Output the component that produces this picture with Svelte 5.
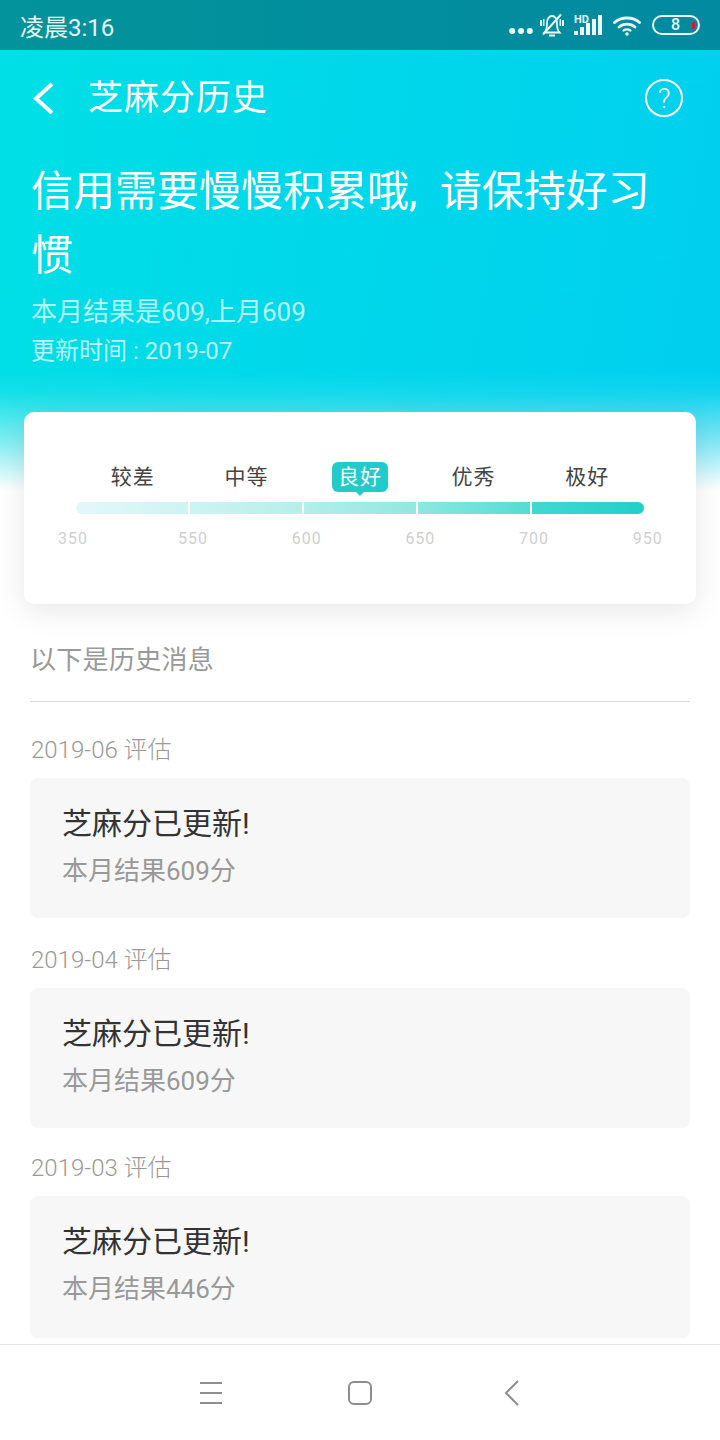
<script>
  const levels = ["较差", "中等", "良好", "优秀", "极好"];
  const scores = ["350", "550", "600", "650", "700", "950"];
  const history = [
    { date: "2019-06 评估", text: "本月结果609分" },
    { date: "2019-04 评估", text: "本月结果609分" },
    { date: "2019-03 评估", text: "本月结果446分" },
  ];
</script>

<div class="page">
  <div class="status">
    <span class="time">凌晨3:16</span>
    <div class="status-icons">
      <svg class="dots" width="24" height="8" viewBox="0 0 24 8" fill="#e8fbfd"><circle cx="3.200" cy="4" r="3" /><circle cx="12" cy="4" r="3" /><circle cx="20.800" cy="4" r="3" /></svg>
      <svg class="bell" width="24" height="24" viewBox="0 0 24 24" fill="none" stroke="#e8fbfd" stroke-width="1.800">
        <path d="M4.500 19.500 C6.500 17.500 7 14.500 7 10.500 C7 6 9 3 12 3 C15 3 17 6 17 10.500 C17 14.500 17.500 17.500 19.500 19.500 Z" />
        <path d="M9 22.500 H15" stroke-width="2" />
        <path d="M3 21.500 L21 1.500" stroke-width="2" />
        <path d="M1 7 V13 M23 7 V13" stroke-width="2" />
        <path d="M3.800 6 V13 M20.200 6 V13" stroke-width="1.400" />
      </svg>
      <svg class="signal" width="29" height="22" viewBox="0 0 29 22" fill="#e8fbfd">
        <rect x="0" y="17" width="4" height="4" />
        <rect x="6" y="13" width="4" height="8" />
        <rect x="12" y="9" width="4" height="12" />
        <rect x="18" y="5" width="4" height="16" />
        <rect x="24" y="1" width="4" height="20" />
        <text x="0" y="9" class="hd">HD</text>
      </svg>
      <svg class="wifi" width="28" height="20" viewBox="0 0 28 20" fill="none" stroke="#e8fbfd" stroke-width="2.800" stroke-linecap="round">
        <path d="M1.500 6.500 C8 0.500 20 0.500 26.500 6.500" />
        <path d="M6 11 C10.500 7.200 17.500 7.200 22 11" />
        <path d="M10.500 14.500 C12.500 13.200 15.500 13.200 17.500 14.500" stroke-width="2.200" />
        <circle cx="14" cy="18" r="1.800" fill="#e8fbfd" stroke="none" />
      </svg>
      <div class="battery"><span>8</span><i></i></div>
    </div>
  </div>

  <header class="hero">
    <div class="nav">
      <svg class="back" width="24" height="32" viewBox="0 0 24 32" fill="none" stroke="#fff" stroke-width="4">
        <path d="M21 2 L5 16.500 L21 31" />
      </svg>
      <span class="nav-title">芝麻分历史</span>
      <div class="help">?</div>
    </div>
    <h1>信用需要慢慢积累哦, 请保持好习惯</h1>
    <p class="sub">本月结果是609,上月609</p>
    <p class="updated">更新时间 : 2019-07</p>
  </header>

  <section class="card">
    <div class="levels">
      {#each levels as level, i}
        <span class="level" class:active={i === 2}>{level}</span>
      {/each}
    </div>
    <div class="bar">
      {#each levels as level}
        <i></i>
      {/each}
    </div>
    <div class="scores">
      {#each scores as score}
        <span>{score}</span>
      {/each}
    </div>
  </section>

  <main class="list">
    <div class="list-title">以下是历史消息</div>
    {#each history as item}
      <div class="entry">
        <div class="date">{item.date}</div>
        <div class="item">
          <div class="item-title">芝麻分已更新!</div>
          <div class="item-text">{item.text}</div>
        </div>
      </div>
    {/each}
  </main>

  <nav class="softkeys">
    <svg width="24" height="22" viewBox="0 0 24 22" fill="#8e8e8e"><rect x="1" y="0" width="22" height="2" /><rect x="1" y="10" width="22" height="2" /><rect x="1" y="20" width="22" height="2" /></svg>
    <svg class="home" width="24" height="24" viewBox="0 0 24 24" fill="none" stroke="#8e8e8e" stroke-width="2"><rect x="1" y="1" width="22" height="22" rx="5" /></svg>
    <svg class="key-back" width="16" height="26" viewBox="0 0 16 26" fill="none" stroke="#8e8e8e" stroke-width="2"><path d="M14 1 L2 13 L14 25" /></svg>
  </nav>
</div>

<style>
  :global(body) {
    margin: 0;
    background: #fff;
  }

  .page {
    position: relative;
    width: 720px;
    height: 1440px;
    overflow: hidden;
    background: #fff;
    font-family: "Roboto", "Noto Sans CJK SC", sans-serif;
  }

  .status {
    height: 50px;
    box-sizing: border-box;
    padding: 0 20px;
    display: flex;
    align-items: center;
    justify-content: space-between;
    background: linear-gradient(90deg, #03939b, #028aa0);
  }

  .time {
    font-size: 24px;
    color: #e4f8f8;
  }

  .status-icons {
    display: flex;
    align-items: center;
  }

  .dots {
    margin-top: 12px;
    margin-right: 7px;
  }

  .bell {
    margin-right: 10px;
  }

  .signal {
    margin-right: 10px;
  }

  .wifi {
    margin-right: 11px;
    margin-top: 2px;
  }

  .hd {
    font: bold 11px "Roboto", sans-serif;
    fill: #e8fbfd;
  }

  .battery {
    position: relative;
    width: 48px;
    height: 20px;
    box-sizing: border-box;
    border: 2px solid #e8fbfd;
    border-radius: 10px;
    display: flex;
    align-items: center;
    justify-content: center;
    margin-top: -1px;
  }

  .battery span {
    font-size: 16px;
    font-weight: 500;
    color: #e8fbfd;
    margin-left: -1px;
  }

  .battery i {
    position: absolute;
    right: 3px;
    top: 5px;
    width: 3px;
    height: 7px;
    background: #c8202c;
  }

  .hero {
    height: 440px;
    box-sizing: border-box;
    padding: 0 31px;
    color: #fff;
    background: linear-gradient(180deg, rgba(255, 255, 255, 0) 73%, rgba(255, 255, 255, 0.08) 78%, rgba(255, 255, 255, 0.55) 90%, #fff 100%), linear-gradient(100deg, #00dfe6, #00cfef);
  }

  .nav {
    height: 96px;
    display: flex;
    align-items: center;
  }

  .back {
    margin-right: 34px;
  }

  .nav-title {
    font-size: 35px;
    flex: 1;
    letter-spacing: 1px;
    margin-bottom: 8px;
    margin-left: -1px;
  }

  .help {
    width: 34px;
    height: 34px;
    border: 2px solid #fff;
    border-radius: 50%;
    margin-right: 6px;
    display: flex;
    align-items: center;
    justify-content: center;
    font-size: 28px;
    font-weight: 300;
  }

  h1 {
    width: 640px;
    margin: 14px 0 0;
    font-size: 42px;
    line-height: 64px;
    font-weight: 400;
    word-spacing: 12px;
  }

  .sub {
    margin: 6px 0 0;
    font-size: 26px;
    line-height: 36px;
    color: rgba(255, 255, 255, 0.72);
  }

  .updated {
    margin: 5px 0 0;
    font-size: 24px;
    line-height: 32px;
    color: rgba(255, 255, 255, 0.72);
  }

  .card {
    position: absolute;
    left: 24px;
    top: 412px;
    width: 672px;
    height: 192px;
    box-sizing: border-box;
    padding: 50px 52px 0;
    background: #fff;
    border-radius: 10px;
    box-shadow: 0 6px 30px rgba(0, 0, 0, 0.1);
  }

  .levels {
    display: flex;
    justify-content: space-around;
    height: 30px;
  }

  .level {
    position: relative;
    width: 56px;
    height: 30px;
    border-radius: 6px;
    text-align: center;
    font-size: 21px;
    line-height: 30px;
    letter-spacing: 1px;
    color: #444;
  }

  .level.active {
    color: #fff;
    background: #22cbc9;
  }

  .level.active::after {
    content: "";
    position: absolute;
    left: 24px;
    bottom: -4px;
    border-left: 4px solid transparent;
    border-right: 4px solid transparent;
    border-top: 4px solid #22cbc9;
  }

  .bar {
    margin-top: 10px;
    height: 12px;
    display: flex;
    gap: 2px;
    border-radius: 6px;
    overflow: hidden;
    background: #fff;
  }

  .bar i {
    flex: 1;
    background: linear-gradient(90deg, #e3f8f8, #cdf4f2);
  }

  .bar i:nth-child(2) {
    background: linear-gradient(90deg, #cdf4f2, #b6eeea);
  }

  .bar i:nth-child(3) {
    background: linear-gradient(90deg, #b3efeb, #92e7e0);
  }

  .bar i:nth-child(4) {
    background: linear-gradient(90deg, #8ee7e0, #54dcd7);
  }

  .bar i:nth-child(5) {
    background: linear-gradient(90deg, #42d8d3, #22cfc9);
  }

  .scores {
    display: flex;
    margin: 15px -18px 0;
    font-size: 16px;
    line-height: 20px;
    letter-spacing: 1px;
    color: #cfcfcf;
  }

  .scores span {
    flex: none;
    width: 113.700px;
  }

  .scores span:first-child {
    width: 120px;
  }

  .list {
    position: absolute;
    left: 30px;
    top: 604px;
    width: 660px;
  }

  .list-title {
    height: 98px;
    box-sizing: border-box;
    border-bottom: 1px solid #dcdcdc;
    padding-top: 38px;
    font-size: 26px;
    line-height: 36px;
    letter-spacing: 0.300px;
    color: #999;
  }

  .entry {
    margin-top: 27px;
  }

  .entry:nth-child(2) {
    margin-top: 33px;
  }

  .entry:nth-child(4) {
    margin-top: 25px;
  }

  .date {
    padding-left: 1px;
    font-size: 24px;
    font-weight: 300;
    line-height: 30px;
    color: #999;
  }

  .item {
    margin-top: 13px;
    height: 140px;
    box-sizing: border-box;
    padding: 26px 32px;
    background: #f7f7f7;
    border-radius: 8px;
  }

  .entry:nth-child(4) .item {
    height: 142px;
  }

  .item-title {
    font-size: 30px;
    line-height: 40px;
    color: #333;
  }

  .item-text {
    margin-top: 9px;
    font-size: 26px;
    line-height: 36px;
    color: #999;
  }

  .softkeys {
    position: absolute;
    left: 0;
    right: 0;
    bottom: 0;
    height: 96px;
    border-top: 1px solid #e4e4e4;
    background: #fff;
    display: flex;
    align-items: center;
    box-sizing: border-box;
    padding-left: 199px;
  }

  .home {
    margin-left: 125px;
  }

  .key-back {
    margin-left: 132px;
  }
</style>
